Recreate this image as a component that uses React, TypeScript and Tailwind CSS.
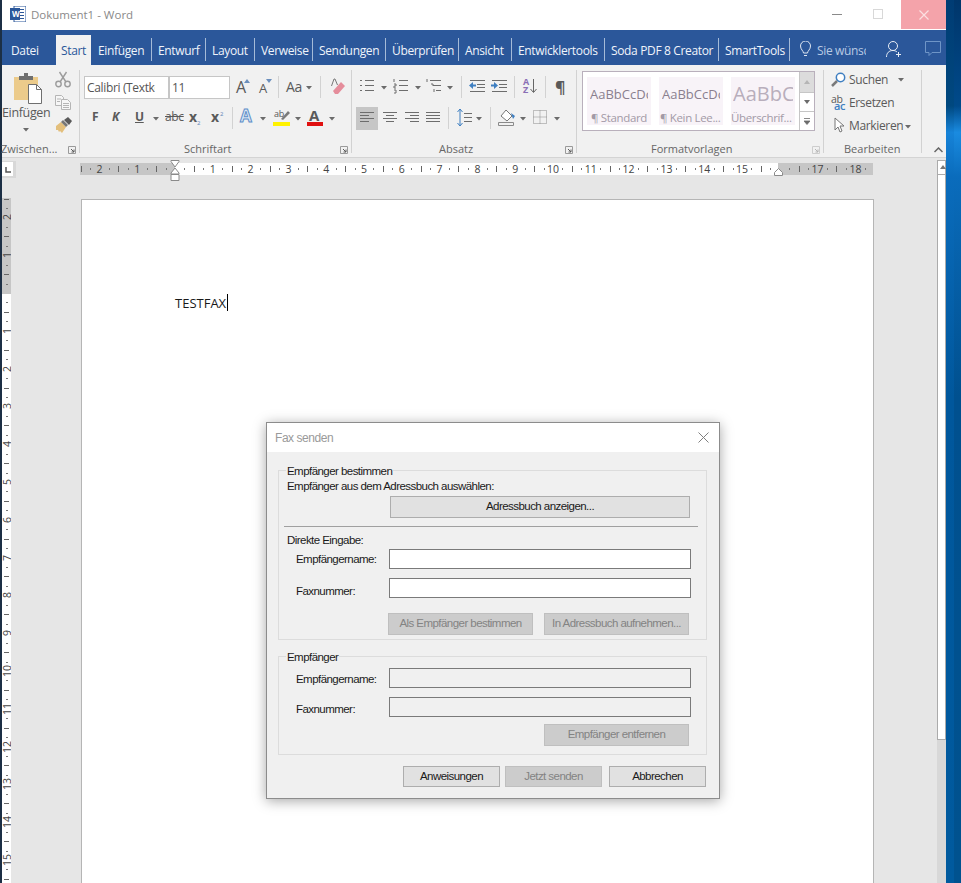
import React from 'react'

const ui = '[font-family:Open_Sans,Noto_Sans,sans-serif] tracking-[-0.35px]'
const dlg = '[font-family:Liberation_Sans,Arial,sans-serif]'

const tabs = [
  { label: 'Einfügen', cls: 'left-[98px]' },
  { label: 'Entwurf', cls: 'left-[158px]' },
  { label: 'Layout', cls: 'left-[212px]' },
  { label: 'Verweise', cls: 'left-[261px]' },
  { label: 'Sendungen', cls: 'left-[319px]' },
  { label: 'Überprüfen', cls: 'left-[392px]' },
  { label: 'Ansicht', cls: 'left-[465px]' },
  { label: 'Entwicklertools', cls: 'left-[518px]' },
  { label: 'Soda PDF 8 Creator', cls: 'left-[611px]' },
  { label: 'SmartTools', cls: 'left-[725px]' },
]

const tabSeps = [
  'left-[151px]', 'left-[205px]', 'left-[254px]', 'left-[312px]', 'left-[385px]',
  'left-[458px]', 'left-[511px]', 'left-[604px]', 'left-[718px]', 'left-[789px]',
]

const caretSpots = [
  'left-[158px] top-[86px]', 'left-[219px] top-[86px]', 'left-[306px] top-[86px]',
  'left-[153px] top-[117px]', 'left-[260px] top-[117px]', 'left-[295px] top-[117px]', 'left-[329px] top-[117px]',
  'left-[381px] top-[86px]', 'left-[415px] top-[86px]', 'left-[447px] top-[86px]',
  'left-[476px] top-[117px]', 'left-[520px] top-[117px]', 'left-[554px] top-[117px]',
  'left-[898px] top-[78px]', 'left-[905px] top-[125px]', 'left-[23px] top-[128px]',
]

const ribbonSeps = [
  'left-[79px] top-[70px] h-[83px]', 'left-[351px] top-[70px] h-[83px]', 'left-[576px] top-[70px] h-[83px]',
  'left-[823px] top-[70px] h-[83px]', 'left-[921px] top-[70px] h-[83px]',
  'left-[278px] top-[76px] h-[22px]', 'left-[320px] top-[76px] h-[22px]', 'left-[461px] top-[76px] h-[22px]',
  'left-[514px] top-[76px] h-[22px]', 'left-[545px] top-[76px] h-[22px]',
  'left-[232px] top-[107px] h-[22px]', 'left-[448px] top-[107px] h-[22px]', 'left-[490px] top-[107px] h-[22px]',
]

const launchers = ['left-[68px]', 'left-[340px]', 'left-[565px]', 'left-[812px] opacity-40']

function Caret({ className }: { className: string }) {
  return (
    <svg className={`absolute ${className}`} width="6" height="4" viewBox="0 0 6 4">
      <path d="M0 0h6L3 3.5z" fill="#6b6b6b" />
    </svg>
  )
}

function Launcher({ className }: { className: string }) {
  return (
    <svg className={`absolute top-[146px] ${className}`} width="8" height="8" viewBox="0 0 8 8" fill="none">
      <path d="M.5 7.5v-7h7v7z" stroke="#9a9a9a" />
      <path d="M3 3l3 3M6 3.5V6H3.5" stroke="#5a5a5a" />
    </svg>
  )
}

function LinesIcon({ className, rows }: { className: string; rows: string[] }) {
  return (
    <svg className={`absolute ${className}`} width="16" height="15" viewBox="0 0 16 15" fill="none" stroke="#6d6d6d">
      {rows.map((d) => (
        <path key={d} d={d} />
      ))}
    </svg>
  )
}

function HRuler() {
  const marks = []
  for (let i = -3; i <= 18; i++) {
    const x = 95 + i * 37.8
    if (i !== 0 && i !== 16 && i !== -3) {
      marks.push(
        <span key={`n${i}`} className="absolute top-[-1px] w-4 -translate-x-1/2 text-center text-[10.5px] leading-[14px] tracking-normal text-[#444]" style={{ left: x }}>
          {Math.abs(i)}
        </span>,
      )
    }
    for (const q of [0.25, 0.5, 0.75]) {
      const tx = x + q * 37.8
      if (tx < 0 || tx > 793) continue
      marks.push(
        <span
          key={`t${i}${q}`}
          className={q === 0.5 ? 'absolute top-[3px] h-[6px] w-px bg-[#666]' : 'absolute top-[5px] h-[2px] w-px bg-[#777]'}
          style={{ left: Math.round(tx) }}
        />,
      )
    }
  }
  return (
    <div className={`absolute left-[80px] top-[163px] h-[12px] w-[793px] overflow-hidden bg-[#c6c6c6] ${ui}`}>
      <div className="absolute left-[95px] top-0 h-full w-[603px] bg-white" />
      {marks}
    </div>
  )
}

function VRuler() {
  const marks = []
  for (let i = -3; i <= 16; i++) {
    const y = 95 + i * 37.8
    if (i !== 0 && i !== -3) {
      marks.push(
        <span key={`n${i}`} className="absolute left-[-3px] h-[16px] w-[16px] -translate-y-1/2 -rotate-90 text-center text-[10.5px] leading-[16px] tracking-normal text-[#444]" style={{ top: y }}>
          {Math.abs(i)}
        </span>,
      )
    }
    for (const q of [0.25, 0.5, 0.75]) {
      const ty = y + q * 37.8
      if (ty < 0) continue
      marks.push(
        <span
          key={`t${i}${q}`}
          className={q === 0.5 ? 'absolute left-[2px] h-px w-[5px] bg-[#666]' : 'absolute left-[4px] h-px w-[2px] bg-[#777]'}
          style={{ top: Math.round(ty) }}
        />,
      )
    }
  }
  return (
    <div className={`absolute left-[2px] top-[198px] h-[685px] w-[9px] overflow-hidden bg-white ${ui}`}>
      <div className="absolute left-0 top-0 h-[96px] w-full bg-[#c6c6c6]" />
      {marks}
    </div>
  )
}

function Btn({ className, label, off }: { className: string; label: string; off?: boolean }) {
  return (
    <div
      className={`absolute flex items-center justify-center whitespace-nowrap border text-[11.5px] tracking-[-0.55px] ${
        off ? 'border-[#bfbfbf] bg-[#cccccc] text-[#838383]' : 'border-[#adadad] bg-[#e1e1e1] text-[#1a1a1a]'
      } ${className}`}
    >
      {label}
    </div>
  )
}

function Field({ className, off }: { className: string; off?: boolean }) {
  return <div className={`absolute h-[20px] w-[302px] border border-[#7a7a7a] ${off ? 'bg-[#f0f0f0]' : 'bg-white'} ${className}`} />
}

function Label({ className, children }: { className: string; children: React.ReactNode }) {
  return <span className={`absolute whitespace-nowrap text-[11.5px] leading-[14px] tracking-[-0.55px] text-[#1a1a1a] ${className}`}>{children}</span>
}

function FaxDialog() {
  return (
    <div className={`absolute left-[266px] top-[422px] h-[377px] w-[454px] border border-[#8c8c8c] bg-[#f0f0f0] shadow-[0_2px_12px_rgba(0,0,0,0.35)] ${dlg}`}>
      <div className="absolute inset-x-0 top-0 flex h-[29px] items-center justify-between bg-white pl-2 pr-[10px]">
        <span className="text-[12px] tracking-[-0.45px] text-[#9a9a9a]">Fax senden</span>
        <svg width="11" height="11" viewBox="0 0 11 11" stroke="#7f7f7f" fill="none">
          <path d="M.5.5l10 10M10.5.5l-10 10" />
        </svg>
      </div>

      <div className="absolute left-[11px] top-[47px] h-[170px] w-[429px] border border-[#dcdcdc]" />
      <Label className="left-[19px] top-[41px] bg-[#f0f0f0] px-px">Empfänger bestimmen</Label>
      <Label className="left-[20px] top-[56px]">Empfänger aus dem Adressbuch auswählen:</Label>
      <Btn className="left-[123px] top-[73px] h-[22px] w-[300px]" label="Adressbuch anzeigen..." />
      <div className="absolute left-[17px] top-[103px] h-px w-[414px] bg-[#a0a0a0]" />
      <Label className="left-[20px] top-[110px]">Direkte Eingabe:</Label>
      <Label className="left-[29px] top-[129px]">Empfängername:</Label>
      <Field className="left-[122px] top-[126px]" />
      <Label className="left-[29px] top-[161px]">Faxnummer:</Label>
      <Field className="left-[122px] top-[155px]" />
      <Btn off className="left-[121px] top-[190px] h-[22px] w-[145px]" label="Als Empfänger bestimmen" />
      <Btn off className="left-[277px] top-[190px] h-[22px] w-[145px]" label="In Adressbuch aufnehmen..." />

      <div className="absolute left-[11px] top-[233px] h-[99px] w-[429px] border border-[#dcdcdc]" />
      <Label className="left-[19px] top-[227px] bg-[#f0f0f0] px-px">Empfänger</Label>
      <Label className="left-[29px] top-[249px]">Empfängername:</Label>
      <Field off className="left-[122px] top-[245px]" />
      <Label className="left-[29px] top-[279px]">Faxnummer:</Label>
      <Field off className="left-[122px] top-[274px]" />
      <Btn off className="left-[277px] top-[301px] h-[22px] w-[145px]" label="Empfänger entfernen" />

      <Btn className="left-[136px] top-[343px] h-[21px] w-[97px]" label="Anweisungen" />
      <Btn off className="left-[238px] top-[343px] h-[21px] w-[97px]" label="Jetzt senden" />
      <Btn className="left-[342px] top-[343px] h-[21px] w-[97px]" label="Abbrechen" />
    </div>
  )
}

function RibbonContent() {
  const txt = 'absolute whitespace-nowrap leading-none text-[#5a5a5a]'
  const group = 'absolute top-[142px] whitespace-nowrap text-[11px] leading-[14px] tracking-normal text-[#666]'
  const thumb = 'absolute top-[77px] h-[48px] w-[64px] bg-[#f8f3f8]'
  const sample = 'absolute top-[87px] whitespace-nowrap text-[13px] leading-[14px] tracking-normal text-[#8a7f8e]'
  const styleName = 'absolute top-[111px] whitespace-nowrap text-[11.5px] leading-[14px] text-[#a39aa7]'

  return (
    <div className={ui}>
      <div className="absolute left-[2px] top-[65px] h-[93px] w-[944px] border-b border-[#d4d4d4] bg-[#f1f1f1]" />
      {ribbonSeps.map((c) => (
        <div key={c} className={`absolute w-px bg-[#d2d2d2] ${c}`} />
      ))}
      {caretSpots.map((c) => (
        <Caret key={c} className={c} />
      ))}
      {launchers.map((c) => (
        <Launcher key={c} className={c} />
      ))}

      {/* Zwischenablage */}
      <svg className="absolute left-[13px] top-[72px]" width="31" height="33" viewBox="0 0 31 33">
        <rect x="1" y="5" width="24" height="23" fill="#eccb8b" />
        <path d="M6 8V4h5V1h4v3h5v4z" fill="#6f6f6f" />
        <path d="M15.5 12.5h8l5 5v14h-13z" fill="#fff" stroke="#6f6f6f" />
        <path d="M23.5 12.5v5h5" fill="none" stroke="#6f6f6f" />
      </svg>
      <span className={`${txt} left-[2px] top-[107px] text-[12.5px] leading-[14px]`}>Einfügen</span>
      <svg className="absolute left-[55px] top-[71px]" width="16" height="17" viewBox="0 0 16 17" fill="none" stroke="#9c9c9c" strokeWidth="1.4">
        <circle cx="3.5" cy="13" r="2.7" />
        <circle cx="12.5" cy="13" r="2.7" />
        <path d="M5 11L11.5 1M11 11L4.5 1" />
      </svg>
      <svg className="absolute left-[55px] top-[95px]" width="16" height="15" viewBox="0 0 16 15" fill="#f6f6f6" stroke="#b5b5b5">
        <path d="M.5.5h6l2 2v8h-8z" />
        <path d="M6.5 4.5h6l3 3v7h-9z" />
        <path d="M2 4h4M2 6.5h3M8 8.500h6M8 10.500h6M8 12.500h6" fill="none" />
      </svg>
      <svg className="absolute left-[55px] top-[117px]" width="17" height="16" viewBox="0 0 17 16">
        <path d="M1 9l5-4 5 5-4 6-2-2-1 1-1-2-2 0z" fill="#e3bf7c" />
        <path d="M6 5l2-2 5 5-2 2z" fill="#777" />
        <path d="M9 3l4-3 4 4-3 4z" fill="#595959" />
      </svg>
      <span className={`${group} left-[1px]`}>Zwischen...</span>

      {/* Schriftart */}
      <div className="absolute left-[84px] top-[76px] h-[23px] w-[85px] border border-[#c6c6c6] bg-white" />
      <div className="absolute left-[169px] top-[76px] h-[23px] w-[61px] border border-[#c6c6c6] bg-white" />
      <div className="absolute left-[87px] top-[80px] w-[68px] overflow-hidden whitespace-nowrap text-[12px] leading-[16px] text-[#555]">Calibri (Textkörper)</div>
      <span className="absolute left-[172px] top-[80px] text-[12px] leading-[16px] text-[#555]">11</span>
      <span className={`${txt} left-[236px] top-[79px] text-[16px]`}>A</span>
      <span className={`${txt} left-[259px] top-[82px] text-[13px]`}>A</span>
      <svg className="absolute left-[244px] top-[79px]" width="6" height="4"><path d="M0 4h6L3 0z" fill="#6b8fbd" /></svg>
      <svg className="absolute left-[266px] top-[79px]" width="6" height="4"><path d="M0 0h6L3 4z" fill="#6b8fbd" /></svg>
      <span className={`${txt} left-[286px] top-[80px] text-[14px]`}>Aa</span>
      <svg className="absolute left-[329px] top-[78px]" width="16" height="17" viewBox="0 0 16 17">
        <path d="M4 13l8-9 4 4-7 8H6z" fill="#e58d9b" />
        <path d="M2.500 8L5 1h1l2.500 6" fill="none" stroke="#777" />
      </svg>
      <span className={`${txt} left-[92px] top-[111px] text-[12px] font-bold`}>F</span>
      <span className={`${txt} left-[112px] top-[111px] text-[12px] font-bold italic`}>K</span>
      <span className={`${txt} left-[135px] top-[111px] text-[12px] font-bold underline`}>U</span>
      <span className={`${txt} left-[165px] top-[111px] text-[12px] line-through`}>abc</span>
      <span className={`${txt} left-[189px] top-[110px] text-[14px] font-bold`}>x</span>
      <span className="absolute left-[197px] top-[120px] text-[6px] leading-none text-[#5f86b8]">2</span>
      <span className={`${txt} left-[211px] top-[110px] text-[14px] font-bold`}>x</span>
      <span className="absolute left-[220px] top-[111px] text-[6px] leading-none text-[#5f86b8]">2</span>
      <span className="absolute left-[240px] top-[107px] text-[17px] font-bold leading-none text-[#dbe7f5] [-webkit-text-stroke:1px_#5f8fc9]">A</span>
      <span className={`${txt} left-[274px] top-[109px] text-[9px]`}>ab</span>
      <svg className="absolute left-[280px] top-[110px]" width="10" height="11" viewBox="0 0 10 11"><path d="M1 9l7-8 2 2-7 7z" fill="#7a7a7a" /></svg>
      <div className="absolute left-[273px] top-[122px] h-[4px] w-[17px] bg-[#fff200]" />
      <span className={`${txt} left-[309px] top-[108px] text-[15px] font-bold`}>A</span>
      <div className="absolute left-[307px] top-[122px] h-[4px] w-[16px] bg-[#e01010]" />
      <span className={`${group} left-[184px]`}>Schriftart</span>

      {/* Absatz */}
      <LinesIcon className="left-[359px] top-[79px]" rows={['M1 1.500h2M1 6.500h2M1 11.500h2', 'M6 1.500h9M6 6.500h9M6 11.500h9']} />
      <LinesIcon className="left-[393px] top-[79px]" rows={['M1 0v3M1 5h2v2H1v2h2M1 11h2v3H1', 'M6 1.500h9M6 6.500h9M6 11.500h9']} />
      <LinesIcon className="left-[426px] top-[79px]" rows={['M1 0v3', 'M4 1.500h11M7 6.500h8M10 11.500h5', 'M5 5h2v2M8 10v3']} />
      <LinesIcon className="left-[469px] top-[79px]" rows={['M1 1.500h15M8 5.500h8M8 8.500h8M1 12.500h15']} />
      <LinesIcon className="left-[491px] top-[79px]" rows={['M1 1.500h15M8 5.500h8M8 8.500h8M1 12.500h15']} />
      <svg className="absolute left-[469px] top-[82px]" width="7" height="7"><path d="M0 3.500L4 0v2.500h3v2H4V7z" fill="#3f7fc1" /></svg>
      <svg className="absolute left-[491px] top-[82px]" width="7" height="7"><path d="M7 3.500L3 0v2.500H0v2h3V7z" fill="#3f7fc1" /></svg>
      <span className="absolute left-[523px] top-[78px] text-[9px] font-bold leading-[8px] text-[#8a6fb5]">A<br />Z</span>
      <svg className="absolute left-[530px] top-[79px]" width="7" height="15" fill="none" stroke="#666"><path d="M3.500 0v13M.5 10l3 3.500 3-3.500" /></svg>
      <span className={`${txt} left-[555px] top-[79px] text-[16px] font-bold`}>¶</span>
      <div className="absolute left-[356px] top-[107px] h-[23px] w-[22px] bg-[#c6c6c6]" />
      <LinesIcon className="left-[359px] top-[111px]" rows={['M1 1.500h14M1 4.500h9M1 7.500h14M1 10.500h9']} />
      <LinesIcon className="left-[382px] top-[111px]" rows={['M1 1.500h14M4 4.500h8M1 7.500h14M4 10.500h8']} />
      <LinesIcon className="left-[404px] top-[111px]" rows={['M1 1.500h14M6 4.500h9M1 7.500h14M6 10.500h9']} />
      <LinesIcon className="left-[425px] top-[111px]" rows={['M1 1.500h14M1 4.500h14M1 7.500h14M1 10.500h14']} />
      <svg className="absolute left-[457px] top-[108px]" width="15" height="19" viewBox="0 0 15 19" fill="none">
        <path d="M3 1v17M.5 4L3 1l2.500 3M.5 15L3 18l2.500-3" stroke="#3f7fc1" />
        <path d="M7 5.500h8M7 9.500h8M7 13.500h8" stroke="#6d6d6d" />
      </svg>
      <svg className="absolute left-[498px] top-[108px]" width="18" height="19" viewBox="0 0 18 19" fill="none">
        <path d="M3 8l5-6 6 6-5 5z" fill="#fff" stroke="#777" />
        <path d="M13 5l4 3-2 3z" fill="#3f7fc1" />
        <path d="M.5 14.500h15v3H.5z" stroke="#8a8a8a" />
      </svg>
      <svg className="absolute left-[533px] top-[110px]" width="14" height="14" viewBox="0 0 14 14" fill="none" stroke="#8a8a8a" strokeDasharray="1 1">
        <path d="M.5.5h13v13H.5zM7 .5v13M.5 7h13" />
      </svg>
      <span className={`${group} left-[439px]`}>Absatz</span>

      {/* Formatvorlagen */}
      <div className="absolute left-[582px] top-[71px] h-[60px] w-[233px] border border-[#b9b0bc] bg-white" />
      <div className={`${thumb} left-[587px]`} />
      <div className={`${thumb} left-[659px]`} />
      <div className={`${thumb} left-[731px]`} />
      <div className={`${sample} left-[590px] w-[58px] overflow-hidden`}>AaBbCcDc</div>
      <div className={`${sample} left-[662px] w-[58px] overflow-hidden`}>AaBbCcDc</div>
      <div className="absolute left-[733px] top-[83px] w-[60px] overflow-hidden whitespace-nowrap text-[20px] leading-[22px] tracking-normal text-[#b8aebc]">AaBbCc</div>
      <span className={`${styleName} left-[591px]`}>¶ Standard</span>
      <span className={`${styleName} left-[660px]`}>¶ Kein Lee...</span>
      <span className={`${styleName} left-[731px]`}>Überschrif...</span>
      <div className="absolute left-[800px] top-[72px] h-[21px] w-[14px] bg-[#dcdcdc]" />
      <div className="absolute left-[800px] top-[92px] h-px w-[14px] bg-[#c6c6c6]" />
      <div className="absolute left-[800px] top-[111px] h-px w-[14px] bg-[#c6c6c6]" />
      <div className="absolute left-[799px] top-[72px] h-[58px] w-px bg-[#c6c6c6]" />
      <svg className="absolute left-[804px] top-[80px]" width="6" height="4"><path d="M0 4h6L3 0z" fill="#b5b5b5" /></svg>
      <svg className="absolute left-[804px] top-[100px]" width="6" height="4"><path d="M0 0h6L3 4z" fill="#6b6b6b" /></svg>
      <svg className="absolute left-[804px] top-[118px]" width="6" height="7"><path d="M0 .5h6M0 3h6L3 6.500z" stroke="#6b6b6b" strokeWidth=".8" fill="#6b6b6b" /></svg>
      <span className={`${group} left-[651px]`}>Formatvorlagen</span>

      {/* Bearbeiten */}
      <svg className="absolute left-[831px] top-[72px]" width="15" height="15" viewBox="0 0 15 15" fill="none">
        <circle cx="9.500" cy="5.500" r="4.200" fill="#fff" stroke="#3f7fc1" strokeWidth="1.500" />
        <path d="M6 9l-5 5" stroke="#7a7a7a" strokeWidth="2.500" />
      </svg>
      <span className={`${txt} left-[849px] top-[74px] text-[12px] leading-[14px]`}>Suchen</span>
      <span className={`${txt} left-[831px] top-[94px] text-[10.500px] leading-[8px]`}>ab</span>
      <span className="absolute left-[834px] top-[102px] text-[11px] font-semibold leading-[8px] text-[#3f7fc1]">ac</span>
      <span className={`${txt} left-[849px] top-[97px] text-[12px] leading-[14px]`}>Ersetzen</span>
      <svg className="absolute left-[834px] top-[117px]" width="12" height="17" viewBox="0 0 12 17"><path d="M1 1v12l3-3 2 5 2-1-2-5h4z" fill="#fff" stroke="#777" /></svg>
      <span className={`${txt} left-[849px] top-[120px] text-[12px] leading-[14px]`}>Markieren</span>
      <span className={`${group} left-[844px]`}>Bearbeiten</span>
      <svg className="absolute left-[934px] top-[147px]" width="9" height="6" fill="none" stroke="#666" strokeWidth="1.500"><path d="M.5 5L4.500 1l4 4" /></svg>
    </div>
  )
}

export default function App() {
  return (
    <div className="relative h-[883px] w-[961px] overflow-hidden bg-[#e6e6e6]">
      {/* desktop behind the window */}
      <div className="absolute inset-y-0 left-0 w-[2px] bg-[#1c2f45]" />
      <div className="absolute inset-y-0 left-[946px] w-[8px] bg-[linear-gradient(to_bottom,#003c74_0%,#00487f_12%,#1683d8_15%,#0a6cbc_20%,#00579c_45%,#005a9e_100%)]" />
      <div className="absolute inset-y-0 left-[954px] w-[7px] bg-[linear-gradient(to_bottom,#00366b_0%,#004a8a_12%,#1a8be0_15%,#0a6cbc_20%,#00508f_45%,#00528f_100%)]" />

      {/* title bar */}
      <div className={`absolute left-[2px] top-0 h-[30px] w-[944px] bg-white ${ui}`}>
        <svg className="absolute left-[8px] top-[6px]" width="16" height="16" viewBox="0 0 16 16">
          <rect x="4" y="0" width="12" height="16" fill="#fff" stroke="#2b579a" />
          <path d="M9 3.500h5M9 6.500h5M9 9.500h5M9 12.500h5" stroke="#2b579a" />
          <rect x="0" y="2" width="10" height="12" fill="#2b579a" />
        </svg>
        <span className="absolute left-[10px] top-[6px] text-[8px] font-bold leading-[16px] text-white">W</span>
        <span className="absolute left-[29px] top-[6px] text-[11.500px] leading-[18px] tracking-normal text-[#8a8a8a]">Dokument1 - Word</span>
        <div className="absolute left-[830px] top-[14px] h-px w-[10px] bg-[#8a8a8a]" />
        <div className="absolute left-[871px] top-[9px] h-[10px] w-[10px] border border-[#d8d8d8]" />
        <div className="absolute left-[899px] top-0 flex h-[29px] w-[45px] items-center justify-center bg-[#f4a3aa]">
          <svg width="10" height="10" viewBox="0 0 10 10" stroke="#fbdfe1" strokeWidth="1.200" fill="none">
            <path d="M.5.5l9 9M9.500.5l-9 9" />
          </svg>
        </div>
      </div>

      {/* tabs */}
      <div className="absolute left-[2px] top-[30px] h-[35px] w-[944px] bg-[#2b579a]" />
      <div className={`absolute left-0 top-[30px] h-[35px] w-[946px] text-[12px] text-[#f0f4fa] ${ui}`}>
        <span className="absolute left-[11px] top-[13px] leading-[16px]">Datei</span>
        <div className="absolute left-[56px] top-[5px] h-[30px] w-[35px] bg-[#f1f1f1] pl-[5px] pt-[8px] leading-[16px] text-[#2b579a]">Start</div>
        {tabs.map((t) => (
          <span key={t.label} className={`absolute top-[13px] whitespace-nowrap leading-[16px] ${t.cls}`}>
            {t.label}
          </span>
        ))}
        {tabSeps.map((c) => (
          <div key={c} className={`absolute top-[8px] h-[23px] w-px bg-[#a5bbd8] ${c}`} />
        ))}
        <svg className="absolute left-[800px] top-[11px]" width="11" height="17" viewBox="0 0 11 17" fill="none" stroke="#dfe7f2">
          <path d="M3.500 12c0-2-3-3.500-3-7a5 5 0 0110 0c0 3.500-3 5-3 7zM4 14.500h3" />
        </svg>
        <div className="absolute left-[817px] top-[13px] w-[49px] overflow-hidden whitespace-nowrap leading-[16px] text-[#b9cae3]">Sie wünschen</div>
        <svg className="absolute left-[886px] top-[11px]" width="16" height="17" viewBox="0 0 16 17" fill="none" stroke="#e8eef6">
          <circle cx="7" cy="5" r="4.500" />
          <path d="M.5 16c0-4 2.500-6.500 6.500-6.500 1.500 0 3 .5 4 1.500M12.500 11v5M10 13.500h5" />
        </svg>
        <svg className="absolute left-[925px] top-[11px]" width="17" height="15" viewBox="0 0 17 15" fill="none" stroke="#6f95c7">
          <path d="M.5.5h15v11H7l-3 3v-3H.5z" />
        </svg>
      </div>

      <RibbonContent />

      {/* ruler row */}
      <div className="absolute left-[2px] top-[161px] h-[17px] w-[14px] bg-[#d8d8d8]" />
      <div className="absolute left-[2px] top-[162px] h-[14px] w-[11px] bg-white" />
      <svg className="absolute left-[5px] top-[167px]" width="6" height="6"><path d="M1 0v5h5" fill="none" stroke="#555" strokeWidth="1.500" /></svg>
      <HRuler />
      <svg className="absolute left-[170px] top-[160px]" width="10" height="22" viewBox="0 0 10 22" fill="#fff" stroke="#8a8a8a">
        <path d="M1 .5h8v1L5 7 1 1.500zM5 8l4 5v1H1v-1zM1 14.500h8v6H1z" />
      </svg>
      <svg className="absolute left-[774px] top-[168px]" width="9" height="8" viewBox="0 0 9 8" fill="#fff" stroke="#8a8a8a">
        <path d="M4.500.5l4 4v3h-8v-3z" />
      </svg>
      <VRuler />

      {/* page */}
      <div className="absolute left-[81px] top-[199px] h-[700px] w-[793px] border border-[#b5b5b5] bg-white">
        <span className="absolute left-[93px] top-[95px] [font-family:Open_Sans,sans-serif] text-[13px] leading-[16px] tracking-normal text-[#1a1a1a]">TESTFAX</span>
        <div className="absolute left-[145px] top-[94px] h-[17px] w-px bg-black" />
      </div>

      {/* scrollbar */}
      <div className="absolute left-[937px] top-[160px] h-[723px] w-[9px] bg-[#d8d8d8]" />
      <div className="absolute left-[937px] top-[160px] h-[580px] w-[9px] border-x border-b border-x-[#ababab] border-b-[#ababab] bg-white" />
      <div className="absolute left-[937px] top-[160px] h-[15px] w-[9px] border border-[#ababab] bg-white" />
      <svg className="absolute left-[940px] top-[165px]" width="6" height="4"><path d="M0 4h6L3 0z" fill="#777" /></svg>

      <FaxDialog />
    </div>
  )
}
